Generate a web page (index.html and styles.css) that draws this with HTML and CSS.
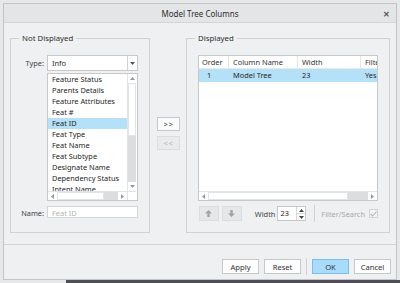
FILE: index.html
```html
<!DOCTYPE html>
<html>
<head>
<meta name="viewport" content="width=device-width, initial-scale=1">
<link rel="stylesheet" href="styles.css">
</head>
<body>

<div class="backdrop"></div>

<div class="dialog">
  <div class="titlebar">
    <span class="title">Model Tree Columns</span>
    <span class="close">&#x2715;</span>
  </div>

  <div class="main">
    <!-- left column: columns that are not shown -->
    <div class="group group-left">
      <span class="legend">Not Displayed</span>
      <div class="form">
        <span class="lbl">Type:</span>
        <div class="select">
          <span class="select-text">Info</span>
          <span class="select-btn"><svg width="5" height="3" viewBox="0 0 5 3"><path d="M0 0H5L2.5 3Z" fill="#555"/></svg></span>
        </div>

        <span></span>
        <div class="listbox">
          <ul class="items">
            <li>Feature Status</li>
            <li>Parents Details</li>
            <li>Feature Attributes</li>
            <li>Feat #</li>
            <li class="selected">Feat ID</li>
            <li>Feat Type</li>
            <li>Feat Name</li>
            <li>Feat Subtype</li>
            <li>Designate Name</li>
            <li>Dependency Status</li>
            <li>Intent Name</li>
          </ul>
          <div class="vscroll">
            <span class="arrow"><svg width="5" height="3" viewBox="0 0 5 3"><path d="M0 3H5L2.5 0Z" fill="#999"/></svg></span>
            <span class="thumb-v"></span>
            <span class="track-v"></span>
            <span class="arrow"><svg width="5" height="3" viewBox="0 0 5 3"><path d="M0 0H5L2.5 3Z" fill="#999"/></svg></span>
          </div>
          <div class="hscroll">
            <span class="arrow"><svg width="3" height="5" viewBox="0 0 3 5"><path d="M3 0V5L0 2.5Z" fill="#999"/></svg></span>
            <span class="thumb-h" style="width:47px"></span>
            <span class="track-h"></span>
            <span class="arrow"><svg width="3" height="5" viewBox="0 0 3 5"><path d="M0 0V5L3 2.5Z" fill="#999"/></svg></span>
          </div>
          <div class="corner"></div>
        </div>

        <span class="lbl">Name:</span>
        <div class="input placeholder">Feat ID</div>
      </div>
    </div>

    <!-- move buttons -->
    <div class="mid">
      <button class="btn-move">&gt; &gt;</button>
      <button class="btn-move disabled">&lt; &lt;</button>
    </div>

    <!-- right column: columns that are shown -->
    <div class="group group-right">
      <span class="legend">Displayed</span>
      <div class="table">
        <div class="trow thead">
          <span class="c-order">Order</span>
          <span class="c-name">Column Name</span>
          <span class="c-width">Width</span>
          <span class="c-filter">Filter/Search</span>
        </div>
        <div class="trow selected">
          <span class="c-order num">1</span>
          <span class="c-name">Model Tree</span>
          <span class="c-width">23</span>
          <span class="c-filter">Yes</span>
        </div>
        <div class="tspace"></div>
        <div class="hscroll">
          <span class="arrow"><svg width="3" height="5" viewBox="0 0 3 5"><path d="M3 0V5L0 2.5Z" fill="#999"/></svg></span>
          <span class="thumb-h" style="width:140px"></span>
          <span class="track-h"></span>
          <span class="arrow"><svg width="3" height="5" viewBox="0 0 3 5"><path d="M0 0V5L3 2.5Z" fill="#999"/></svg></span>
        </div>
      </div>

      <div class="tools">
        <span class="btn-arrow"><svg width="7" height="7" viewBox="0 0 7 7"><path d="M3.5 0L7 3.5H4.7V7H2.3V3.5H0Z" fill="#a3a3a3"/></svg></span>
        <span class="btn-arrow"><svg width="7" height="7" viewBox="0 0 7 7"><path d="M3.5 7L7 3.5H4.7V0H2.3V3.5H0Z" fill="#a3a3a3"/></svg></span>
        <span class="lbl-width">Width</span>
        <div class="spin">
          <span class="spin-text">23</span>
          <span class="spin-btns">
            <span><svg width="5" height="3" viewBox="0 0 5 3"><path d="M0 3H5L2.5 0Z" fill="#444"/></svg></span>
            <span><svg width="5" height="3" viewBox="0 0 5 3"><path d="M0 0H5L2.5 3Z" fill="#444"/></svg></span>
          </span>
        </div>
        <span class="vsep"></span>
        <span class="lbl-filter">Filter/Search</span>
        <span class="check"><svg width="7" height="6" viewBox="0 0 7 6"><path d="M0.5 3L2.6 5L6.5 0.6" fill="none" stroke="#b9b9b9" stroke-width="1.1"/></svg></span>
      </div>
    </div>
  </div>

  <div class="footer">
    <button class="btn">Apply</button>
    <button class="btn">Reset</button>
    <span class="vsep foot-sep"></span>
    <button class="btn btn-ok">OK</button>
    <button class="btn">Cancel</button>
  </div>
</div>

</body>
</html>
```

FILE: styles.css
```css
* {
  box-sizing: border-box;
}

body {
  margin: 0;
  width: 400px;
  height: 283px;
  overflow: hidden;
  position: relative;
  background: #e7e8e9;
  font-family: "Noto Sans", "Segoe UI", sans-serif;
  font-size: 7.4px;
  color: #262626;
}

/* dark desktop behind the dialog */
.backdrop {
  position: absolute;
  left: 66px;
  top: 280px;
  right: 0;
  bottom: 0;
  background: #4e4d58;
}

/* the dialog window */
.dialog {
  position: absolute;
  left: 3px;
  top: 3px;
  width: 394px;
  height: 277px;
  border: 1px solid #c2c4c6;
  background: #eff0f1;
  display: flex;
  flex-direction: column;
}

.titlebar {
  height: 19px;
  background: #e3e5e6;
  border-bottom: 1px solid #d3d5d7;
  display: flex;
  align-items: center;
  justify-content: center;
  position: relative;
  flex: none;
}

.title {
  font-size: 8px;
  color: #2e2e2e;
}

.close {
  position: absolute;
  right: 6px;
  top: 4px;
  font-size: 8px;
  font-weight: bold;
  color: #555;
}

.main {
  display: flex;
  padding: 15px 6px 0 6px;
  flex: none;
}

/* fieldset-like groups */
.group {
  position: relative;
  border: 1px solid #cfd1d3;
  height: 195px;
}

.legend {
  position: absolute;
  top: -6px;
  left: 8px;
  padding: 0 3px;
  background: #eff0f1;
  font-size: 7.8px;
  line-height: 11px;
  color: #2e2e2e;
}

.group-left {
  width: 140px;
  padding: 16px 11px 0 0;
}

.group-right {
  width: 204px;
  padding: 16px 11px 0 11px;
}

.form {
  display: grid;
  grid-template-columns: 33px 91px;
  column-gap: 3px;
  grid-template-rows: 16px 128px 15px;
  row-gap: 2px;
}

.form .input {
  margin-top: 3px;
}

.lbl {
  text-align: right;
  line-height: 16px;
  color: #444;
}

.form .lbl:nth-last-child(2) {
  margin-top: 3px;
  line-height: 15px;
}

.select {
  background: #fff;
  border: 1px solid #c6c8ca;
  display: flex;
}

.select-text {
  flex: 1;
  padding-left: 4px;
  line-height: 14px;
}

.select-btn {
  width: 10px;
  border-left: 1px solid #d0d2d4;
  display: flex;
  align-items: center;
  justify-content: center;
}

/* list with scrollbars */
.listbox {
  background: #fff;
  border: 1px solid #c6c8ca;
  display: grid;
  grid-template-columns: 79px 9px;
  grid-template-rows: 117px 9px;
}

.items {
  margin: 0;
  padding: 0;
  list-style: none;
  overflow: hidden;
}

.items li {
  height: 11px;
  line-height: 11px;
  padding-left: 4px;
  white-space: nowrap;
}

.items li.selected {
  background: #b4e0f8;
}

.vscroll {
  display: flex;
  flex-direction: column;
  border-left: 1px solid #e2e3e4;
}

.vscroll .arrow {
  height: 9px;
  display: flex;
  align-items: center;
  justify-content: center;
}

.thumb-v {
  height: 53px;
  border: 1px solid #e3e4e5;
  background: #fff;
}

.track-v {
  flex: 1;
  background: #dcdddf;
}

.hscroll {
  display: flex;
  height: 9px;
  border-top: 1px solid #e2e3e4;
}

.hscroll .arrow {
  width: 9px;
  display: flex;
  align-items: center;
  justify-content: center;
}

.thumb-h {
  border: 1px solid #e3e4e5;
  background: #fff;
}

.track-h {
  flex: 1;
  background: #dcdddf;
}

.corner {
  border-top: 1px solid #e2e3e4;
  border-left: 1px solid #e2e3e4;
}

.input {
  background: #fff;
  border: 1px solid #d2d4d6;
  padding-left: 4px;
  line-height: 13px;
}

.placeholder {
  color: #b3b3b3;
}

/* middle move buttons */
.mid {
  width: 36px;
  display: flex;
  flex-direction: column;
  align-items: center;
  padding-top: 79px;
  gap: 5px;
}

.btn-move {
  width: 23px;
  height: 14px;
  padding: 0;
  font-family: inherit;
  font-size: 7px;
  letter-spacing: -0.5px;
  background: #fbfbfb;
  border: 1px solid #c6c8ca;
  color: #444;
}

.btn-move.disabled {
  background: #eaebec;
  border-color: #dcdddf;
  color: #b8b8b8;
}

/* displayed table */
.table {
  height: 146px;
  background: #fff;
  border: 1px solid #c6c8ca;
  display: flex;
  flex-direction: column;
  overflow: hidden;
}

.trow {
  display: grid;
  grid-template-columns: 30px 69px 63px 60px;
  height: 13px;
  line-height: 13px;
  white-space: nowrap;
  flex: none;
}

.thead span {
  border-right: 1px solid #e4e5e6;
  border-bottom: 1px solid #e8e9ea;
  color: #333;
}

.trow span {
  padding-left: 3px;
  overflow: hidden;
}

.trow .c-name,
.trow .c-width,
.trow .c-filter {
  padding-left: 4px;
}

.trow .num {
  padding-left: 8px;
}

.trow.selected {
  background: #b4e0f8;
}

.tspace {
  flex: 1;
}

/* tools under the table */
.tools {
  display: flex;
  align-items: center;
  height: 15px;
  margin-top: 5px;
  padding-left: 1px;
}

.btn-arrow {
  width: 20px;
  height: 15px;
  background: #e6e7e8;
  border: 1px solid #dcdddf;
  display: flex;
  align-items: center;
  justify-content: center;
  margin-right: 3px;
}

.lbl-width {
  margin-left: 10px;
  color: #444;
}

.spin {
  margin-left: 2px;
  width: 29px;
  height: 15px;
  background: #fff;
  border: 1px solid #c6c8ca;
  display: flex;
}

.spin-text {
  flex: 1;
  padding-left: 2px;
  line-height: 13px;
}

.spin-btns {
  width: 9px;
  display: flex;
  flex-direction: column;
  border-left: 1px solid #d8d9db;
}

.spin-btns span {
  flex: 1;
  display: flex;
  align-items: center;
  justify-content: center;
}

.spin-btns span + span {
  border-top: 1px solid #d8d9db;
}

.vsep {
  width: 1px;
  height: 17px;
  background: #cfd1d3;
  margin-left: 8px;
}

.lbl-filter {
  margin-left: 6px;
  color: #a9a9a9;
}

.check {
  margin-left: 4px;
  width: 9px;
  height: 9px;
  border: 1px solid #d3d4d6;
  background: #f2f3f3;
  display: flex;
  align-items: center;
  justify-content: center;
}

/* bottom buttons */
.footer {
  margin-top: 11px;
  border-top: 1px solid #d3d5d7;
  flex: 1;
  display: flex;
  justify-content: flex-end;
  align-items: flex-start;
  gap: 5px;
  padding: 14px 5px 0 0;
}

.btn {
  width: 37px;
  height: 15px;
  padding: 0;
  font-family: inherit;
  font-size: 7.6px;
  color: #333;
  background: #fdfdfd;
  border: 1px solid #c6c8ca;
}

.btn-ok {
  background: #a9dbfa;
  border-color: #76bfee;
}

.foot-sep {
  margin: 0;
  height: 17px;
  margin-top: -1px;
}
```
